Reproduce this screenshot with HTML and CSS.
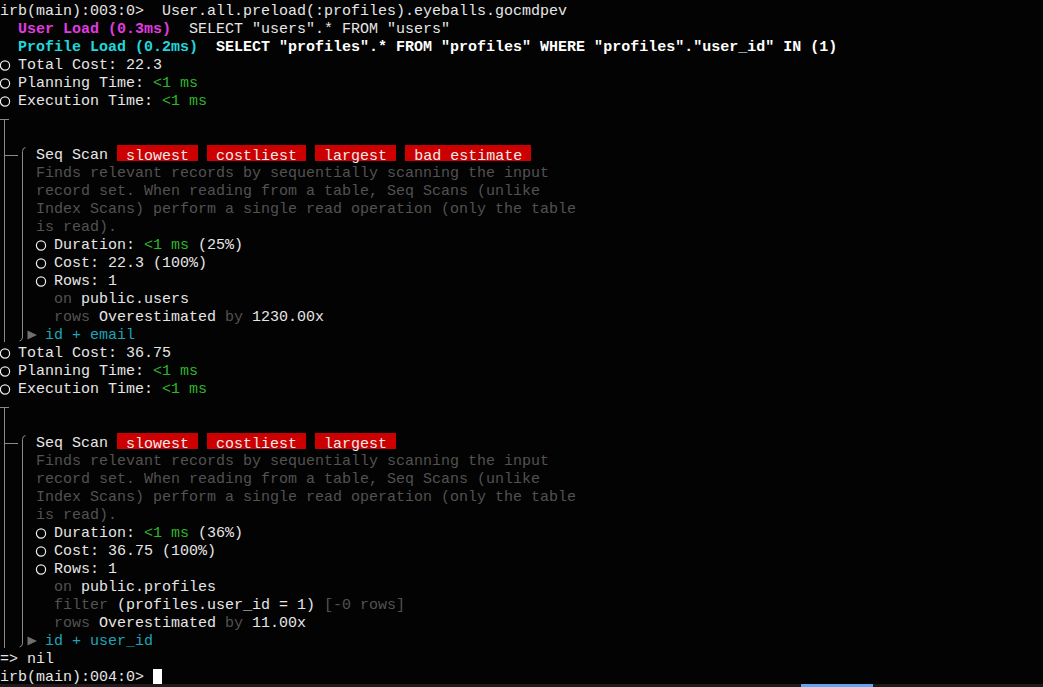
FILE: index.html
```html
<!DOCTYPE html>
<html>
<head>
<meta charset="utf-8">
<link rel="stylesheet" href="styles.css">
</head>
<body>
<div class="term">
<div class="l">irb(main):003:0&gt;  User.all.preload(:profiles).eyeballs.gocmdpev</div>
<div class="l">  <b class="mag">User Load (0.3ms)</b>  SELECT "users".* FROM "users"</div>
<div class="l">  <b class="cyn">Profile Load (0.2ms)</b>  <b class="wht">SELECT "profiles".* FROM "profiles" WHERE "profiles"."user_id" IN (1)</b></div>
<div class="l"><svg class="c" viewBox="0 0 9 18"><circle cx="5" cy="11.5" r="4.6"/></svg> Total Cost: 22.3</div>
<div class="l"><svg class="c" viewBox="0 0 9 18"><circle cx="5" cy="11.5" r="4.6"/></svg> Planning Time: <span class="g">&lt;1 ms</span></div>
<div class="l"><svg class="c" viewBox="0 0 9 18"><circle cx="5" cy="11.5" r="4.6"/></svg> Execution Time: <span class="g">&lt;1 ms</span></div>
<div class="l"><svg class="t" viewBox="0 0 9 18"><path d="M0 11.5H9M4.5 11.5V18"/></svg></div>
<div class="l"><svg class="t" viewBox="0 0 9 18"><path d="M4.5 0V18"/></svg></div>
<div class="l"><svg class="t" viewBox="0 0 9 18"><path d="M4.5 0V18M4.5 11.5H9"/></svg><svg class="t" viewBox="0 0 9 18"><path d="M0 11.5H9"/></svg><svg class="t" viewBox="0 0 9 18"><path d="M4.5 18V7.5Q4.5 4 7.5 3.5"/></svg> Seq Scan <span class="tag"> slowest </span> <span class="tag"> costliest </span> <span class="tag"> largest </span> <span class="tag"> bad estimate </span></div>
<div class="l"><svg class="t" viewBox="0 0 9 18"><path d="M4.5 0V18"/></svg> <svg class="t" viewBox="0 0 9 18"><path d="M4.5 0V18"/></svg> <span class="d">Finds relevant records by sequentially scanning the input</span></div>
<div class="l"><svg class="t" viewBox="0 0 9 18"><path d="M4.5 0V18"/></svg> <svg class="t" viewBox="0 0 9 18"><path d="M4.5 0V18"/></svg> <span class="d">record set. When reading from a table, Seq Scans (unlike</span></div>
<div class="l"><svg class="t" viewBox="0 0 9 18"><path d="M4.5 0V18"/></svg> <svg class="t" viewBox="0 0 9 18"><path d="M4.5 0V18"/></svg> <span class="d">Index Scans) perform a single read operation (only the table</span></div>
<div class="l"><svg class="t" viewBox="0 0 9 18"><path d="M4.5 0V18"/></svg> <svg class="t" viewBox="0 0 9 18"><path d="M4.5 0V18"/></svg> <span class="d">is read).</span></div>
<div class="l"><svg class="t" viewBox="0 0 9 18"><path d="M4.5 0V18"/></svg> <svg class="t" viewBox="0 0 9 18"><path d="M4.5 0V18"/></svg> <svg class="c" viewBox="0 0 9 18"><circle cx="5" cy="11.5" r="4.6"/></svg> Duration: <span class="g">&lt;1 ms</span> (25%)</div>
<div class="l"><svg class="t" viewBox="0 0 9 18"><path d="M4.5 0V18"/></svg> <svg class="t" viewBox="0 0 9 18"><path d="M4.5 0V18"/></svg> <svg class="c" viewBox="0 0 9 18"><circle cx="5" cy="11.5" r="4.6"/></svg> Cost: 22.3 (100%)</div>
<div class="l"><svg class="t" viewBox="0 0 9 18"><path d="M4.5 0V18"/></svg> <svg class="t" viewBox="0 0 9 18"><path d="M4.5 0V18"/></svg> <svg class="c" viewBox="0 0 9 18"><circle cx="5" cy="11.5" r="4.6"/></svg> Rows: 1</div>
<div class="l"><svg class="t" viewBox="0 0 9 18"><path d="M4.5 0V18"/></svg> <svg class="t" viewBox="0 0 9 18"><path d="M4.5 0V18"/></svg>   <span class="d">on</span> public.users</div>
<div class="l"><svg class="t" viewBox="0 0 9 18"><path d="M4.5 0V18"/></svg> <svg class="t" viewBox="0 0 9 18"><path d="M4.5 0V18"/></svg>   <span class="d">rows</span> Overestimated <span class="d">by</span> 1230.00x</div>
<div class="l"><svg class="t" viewBox="0 0 9 18"><path d="M4.5 0V18"/></svg> <svg class="t" viewBox="0 0 9 18"><path d="M4.5 0V13Q4.5 16.5 1.5 17"/></svg><svg class="a" viewBox="0 0 9 18"><path d="M0.5 6.5L10 11L0.5 15.5Z"/></svg> <span class="cy2">id + email</span></div>
<div class="l"><svg class="c" viewBox="0 0 9 18"><circle cx="5" cy="11.5" r="4.6"/></svg> Total Cost: 36.75</div>
<div class="l"><svg class="c" viewBox="0 0 9 18"><circle cx="5" cy="11.5" r="4.6"/></svg> Planning Time: <span class="g">&lt;1 ms</span></div>
<div class="l"><svg class="c" viewBox="0 0 9 18"><circle cx="5" cy="11.5" r="4.6"/></svg> Execution Time: <span class="g">&lt;1 ms</span></div>
<div class="l"><svg class="t" viewBox="0 0 9 18"><path d="M0 11.5H9M4.5 11.5V18"/></svg></div>
<div class="l"><svg class="t" viewBox="0 0 9 18"><path d="M4.5 0V18"/></svg></div>
<div class="l"><svg class="t" viewBox="0 0 9 18"><path d="M4.5 0V18M4.5 11.5H9"/></svg><svg class="t" viewBox="0 0 9 18"><path d="M0 11.5H9"/></svg><svg class="t" viewBox="0 0 9 18"><path d="M4.5 18V7.5Q4.5 4 7.5 3.5"/></svg> Seq Scan <span class="tag"> slowest </span> <span class="tag"> costliest </span> <span class="tag"> largest </span></div>
<div class="l"><svg class="t" viewBox="0 0 9 18"><path d="M4.5 0V18"/></svg> <svg class="t" viewBox="0 0 9 18"><path d="M4.5 0V18"/></svg> <span class="d">Finds relevant records by sequentially scanning the input</span></div>
<div class="l"><svg class="t" viewBox="0 0 9 18"><path d="M4.5 0V18"/></svg> <svg class="t" viewBox="0 0 9 18"><path d="M4.5 0V18"/></svg> <span class="d">record set. When reading from a table, Seq Scans (unlike</span></div>
<div class="l"><svg class="t" viewBox="0 0 9 18"><path d="M4.5 0V18"/></svg> <svg class="t" viewBox="0 0 9 18"><path d="M4.5 0V18"/></svg> <span class="d">Index Scans) perform a single read operation (only the table</span></div>
<div class="l"><svg class="t" viewBox="0 0 9 18"><path d="M4.5 0V18"/></svg> <svg class="t" viewBox="0 0 9 18"><path d="M4.5 0V18"/></svg> <span class="d">is read).</span></div>
<div class="l"><svg class="t" viewBox="0 0 9 18"><path d="M4.5 0V18"/></svg> <svg class="t" viewBox="0 0 9 18"><path d="M4.5 0V18"/></svg> <svg class="c" viewBox="0 0 9 18"><circle cx="5" cy="11.5" r="4.6"/></svg> Duration: <span class="g">&lt;1 ms</span> (36%)</div>
<div class="l"><svg class="t" viewBox="0 0 9 18"><path d="M4.5 0V18"/></svg> <svg class="t" viewBox="0 0 9 18"><path d="M4.5 0V18"/></svg> <svg class="c" viewBox="0 0 9 18"><circle cx="5" cy="11.5" r="4.6"/></svg> Cost: 36.75 (100%)</div>
<div class="l"><svg class="t" viewBox="0 0 9 18"><path d="M4.5 0V18"/></svg> <svg class="t" viewBox="0 0 9 18"><path d="M4.5 0V18"/></svg> <svg class="c" viewBox="0 0 9 18"><circle cx="5" cy="11.5" r="4.6"/></svg> Rows: 1</div>
<div class="l"><svg class="t" viewBox="0 0 9 18"><path d="M4.5 0V18"/></svg> <svg class="t" viewBox="0 0 9 18"><path d="M4.5 0V18"/></svg>   <span class="d">on</span> public.profiles</div>
<div class="l"><svg class="t" viewBox="0 0 9 18"><path d="M4.5 0V18"/></svg> <svg class="t" viewBox="0 0 9 18"><path d="M4.5 0V18"/></svg>   <span class="d">filter</span> (profiles.user_id = 1) <span class="d">[-0 rows]</span></div>
<div class="l"><svg class="t" viewBox="0 0 9 18"><path d="M4.5 0V18"/></svg> <svg class="t" viewBox="0 0 9 18"><path d="M4.5 0V18"/></svg>   <span class="d">rows</span> Overestimated <span class="d">by</span> 11.00x</div>
<div class="l"><svg class="t" viewBox="0 0 9 18"><path d="M4.5 0V18"/></svg> <svg class="t" viewBox="0 0 9 18"><path d="M4.5 0V13Q4.5 16.5 1.5 17"/></svg><svg class="a" viewBox="0 0 9 18"><path d="M0.5 6.5L10 11L0.5 15.5Z"/></svg> <span class="cy2">id + user_id</span></div>
<div class="l">=&gt; nil</div>
<div class="l">irb(main):004:0&gt; <span class="cursor"></span></div>
</div>
<div class="scroll"><div class="thumb"></div></div>
</body>
</html>
```
FILE: styles.css
```css
html, body {
  margin: 0;
  padding: 0;
  background: #030303;
  overflow: hidden;
}
.term {
  height: 684px;
  font-family: "Liberation Mono", "DejaVu Sans Mono", monospace;
  font-size: 15px;
  color: #e6e6e6;
}
.l {
  height: 18px;
  line-height: 24px;
  white-space: pre;
}
b { font-weight: bold; }
.mag { color: #e03be0; }
.cyn { color: #1fd8dc; }
.wht { color: #ffffff; }
.g { color: #2fb42f; }
.d { color: #525252; }
.cy2 { color: #1da5b7; }
.tag {
  display: inline-block;
  vertical-align: top;
  margin-top: 1px;
  height: 16px;
  line-height: 23px;
  background: #cc0000;
  color: #f0eaea;
}
.t, .c, .a {
  display: inline-block;
  width: 9px;
  height: 18px;
  vertical-align: top;
  overflow: visible;
}
.t {
  fill: none;
  stroke: #8a8a8a;
  stroke-width: 1;
}
.c {
  fill: none;
  stroke: #eeeeee;
  stroke-width: 1.2;
}
.a {
  fill: #707070;
  stroke: none;
}
.cursor {
  display: inline-block;
  vertical-align: top;
  margin-top: 3px;
  width: 9px;
  height: 15px;
  background: #ffffff;
}
.scroll {
  height: 3px;
  background: #1c1c1c;
}
.thumb {
  margin-left: 801px;
  width: 72px;
  height: 3px;
  background: #5ea7f0;
}
```
